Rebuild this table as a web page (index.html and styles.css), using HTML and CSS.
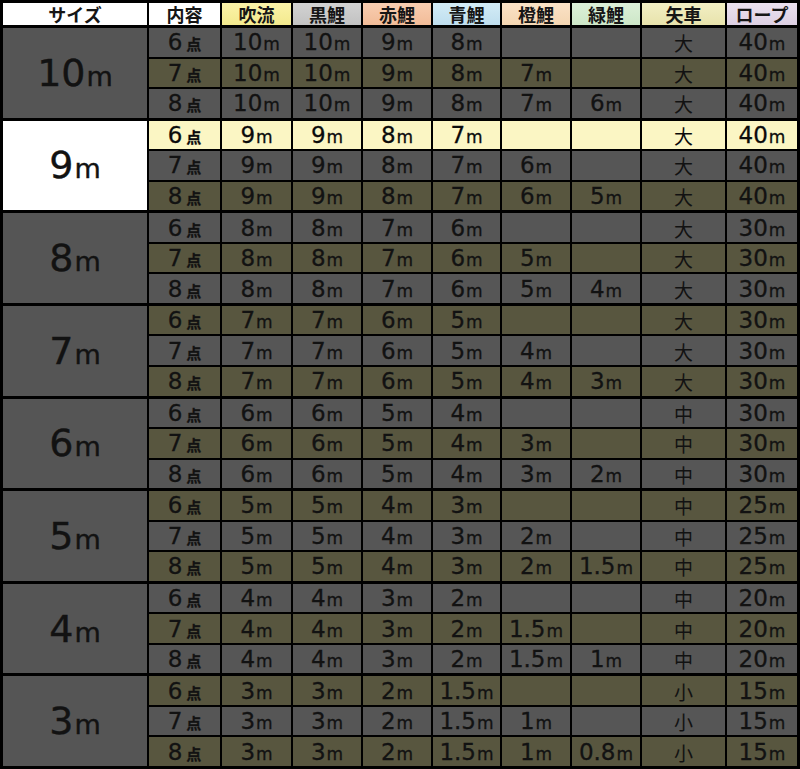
FILE: index.html
```html
<!DOCTYPE html>
<html lang="ja">
<head>
<meta charset="utf-8">
<title>鯉のぼりサイズ表</title>
<link rel="stylesheet" href="styles.css">
</head>
<body>
<div class="chart">
  <div class="head">
    <div class="hc h-size">サイズ</div>
    <div class="hc h-nai">内容</div>
    <div class="hc h-fuki">吹流</div>
    <div class="hc h-kuro">黒鯉</div>
    <div class="hc h-aka">赤鯉</div>
    <div class="hc h-ao">青鯉</div>
    <div class="hc h-dai">橙鯉</div>
    <div class="hc h-mido">緑鯉</div>
    <div class="hc h-ya">矢車</div>
    <div class="hc h-rope">ロープ</div>
  </div>

  <div class="group">
    <div class="size">10<span class="u">m</span></div>
    <div class="rows">
      <div class="row gray"><div class="c">6<span class="p">点</span></div><div class="c">10<span class="u">m</span></div><div class="c">10<span class="u">m</span></div><div class="c">9<span class="u">m</span></div><div class="c">8<span class="u">m</span></div><div class="c"></div><div class="c"></div><div class="c k">大</div><div class="c">40<span class="u">m</span></div></div>
      <div class="row olive"><div class="c">7<span class="p">点</span></div><div class="c">10<span class="u">m</span></div><div class="c">10<span class="u">m</span></div><div class="c">9<span class="u">m</span></div><div class="c">8<span class="u">m</span></div><div class="c">7<span class="u">m</span></div><div class="c"></div><div class="c k">大</div><div class="c">40<span class="u">m</span></div></div>
      <div class="row gray"><div class="c">8<span class="p">点</span></div><div class="c">10<span class="u">m</span></div><div class="c">10<span class="u">m</span></div><div class="c">9<span class="u">m</span></div><div class="c">8<span class="u">m</span></div><div class="c">7<span class="u">m</span></div><div class="c">6<span class="u">m</span></div><div class="c k">大</div><div class="c">40<span class="u">m</span></div></div>
    </div>
  </div>

  <div class="group">
    <div class="size white">9<span class="u">m</span></div>
    <div class="rows">
      <div class="row hl"><div class="c">6<span class="p">点</span></div><div class="c">9<span class="u">m</span></div><div class="c">9<span class="u">m</span></div><div class="c">8<span class="u">m</span></div><div class="c">7<span class="u">m</span></div><div class="c"></div><div class="c"></div><div class="c k">大</div><div class="c">40<span class="u">m</span></div></div>
      <div class="row gray"><div class="c">7<span class="p">点</span></div><div class="c">9<span class="u">m</span></div><div class="c">9<span class="u">m</span></div><div class="c">8<span class="u">m</span></div><div class="c">7<span class="u">m</span></div><div class="c">6<span class="u">m</span></div><div class="c"></div><div class="c k">大</div><div class="c">40<span class="u">m</span></div></div>
      <div class="row olive"><div class="c">8<span class="p">点</span></div><div class="c">9<span class="u">m</span></div><div class="c">9<span class="u">m</span></div><div class="c">8<span class="u">m</span></div><div class="c">7<span class="u">m</span></div><div class="c">6<span class="u">m</span></div><div class="c">5<span class="u">m</span></div><div class="c k">大</div><div class="c">40<span class="u">m</span></div></div>
    </div>
  </div>

  <div class="group">
    <div class="size">8<span class="u">m</span></div>
    <div class="rows">
      <div class="row gray"><div class="c">6<span class="p">点</span></div><div class="c">8<span class="u">m</span></div><div class="c">8<span class="u">m</span></div><div class="c">7<span class="u">m</span></div><div class="c">6<span class="u">m</span></div><div class="c"></div><div class="c"></div><div class="c k">大</div><div class="c">30<span class="u">m</span></div></div>
      <div class="row olive"><div class="c">7<span class="p">点</span></div><div class="c">8<span class="u">m</span></div><div class="c">8<span class="u">m</span></div><div class="c">7<span class="u">m</span></div><div class="c">6<span class="u">m</span></div><div class="c">5<span class="u">m</span></div><div class="c"></div><div class="c k">大</div><div class="c">30<span class="u">m</span></div></div>
      <div class="row gray"><div class="c">8<span class="p">点</span></div><div class="c">8<span class="u">m</span></div><div class="c">8<span class="u">m</span></div><div class="c">7<span class="u">m</span></div><div class="c">6<span class="u">m</span></div><div class="c">5<span class="u">m</span></div><div class="c">4<span class="u">m</span></div><div class="c k">大</div><div class="c">30<span class="u">m</span></div></div>
    </div>
  </div>

  <div class="group">
    <div class="size">7<span class="u">m</span></div>
    <div class="rows">
      <div class="row olive"><div class="c">6<span class="p">点</span></div><div class="c">7<span class="u">m</span></div><div class="c">7<span class="u">m</span></div><div class="c">6<span class="u">m</span></div><div class="c">5<span class="u">m</span></div><div class="c"></div><div class="c"></div><div class="c k">大</div><div class="c">30<span class="u">m</span></div></div>
      <div class="row gray"><div class="c">7<span class="p">点</span></div><div class="c">7<span class="u">m</span></div><div class="c">7<span class="u">m</span></div><div class="c">6<span class="u">m</span></div><div class="c">5<span class="u">m</span></div><div class="c">4<span class="u">m</span></div><div class="c"></div><div class="c k">大</div><div class="c">30<span class="u">m</span></div></div>
      <div class="row olive"><div class="c">8<span class="p">点</span></div><div class="c">7<span class="u">m</span></div><div class="c">7<span class="u">m</span></div><div class="c">6<span class="u">m</span></div><div class="c">5<span class="u">m</span></div><div class="c">4<span class="u">m</span></div><div class="c">3<span class="u">m</span></div><div class="c k">大</div><div class="c">30<span class="u">m</span></div></div>
    </div>
  </div>

  <div class="group">
    <div class="size">6<span class="u">m</span></div>
    <div class="rows">
      <div class="row gray"><div class="c">6<span class="p">点</span></div><div class="c">6<span class="u">m</span></div><div class="c">6<span class="u">m</span></div><div class="c">5<span class="u">m</span></div><div class="c">4<span class="u">m</span></div><div class="c"></div><div class="c"></div><div class="c k">中</div><div class="c">30<span class="u">m</span></div></div>
      <div class="row olive"><div class="c">7<span class="p">点</span></div><div class="c">6<span class="u">m</span></div><div class="c">6<span class="u">m</span></div><div class="c">5<span class="u">m</span></div><div class="c">4<span class="u">m</span></div><div class="c">3<span class="u">m</span></div><div class="c"></div><div class="c k">中</div><div class="c">30<span class="u">m</span></div></div>
      <div class="row gray"><div class="c">8<span class="p">点</span></div><div class="c">6<span class="u">m</span></div><div class="c">6<span class="u">m</span></div><div class="c">5<span class="u">m</span></div><div class="c">4<span class="u">m</span></div><div class="c">3<span class="u">m</span></div><div class="c">2<span class="u">m</span></div><div class="c k">中</div><div class="c">30<span class="u">m</span></div></div>
    </div>
  </div>

  <div class="group">
    <div class="size">5<span class="u">m</span></div>
    <div class="rows">
      <div class="row olive"><div class="c">6<span class="p">点</span></div><div class="c">5<span class="u">m</span></div><div class="c">5<span class="u">m</span></div><div class="c">4<span class="u">m</span></div><div class="c">3<span class="u">m</span></div><div class="c"></div><div class="c"></div><div class="c k">中</div><div class="c">25<span class="u">m</span></div></div>
      <div class="row gray"><div class="c">7<span class="p">点</span></div><div class="c">5<span class="u">m</span></div><div class="c">5<span class="u">m</span></div><div class="c">4<span class="u">m</span></div><div class="c">3<span class="u">m</span></div><div class="c">2<span class="u">m</span></div><div class="c"></div><div class="c k">中</div><div class="c">25<span class="u">m</span></div></div>
      <div class="row olive"><div class="c">8<span class="p">点</span></div><div class="c">5<span class="u">m</span></div><div class="c">5<span class="u">m</span></div><div class="c">4<span class="u">m</span></div><div class="c">3<span class="u">m</span></div><div class="c">2<span class="u">m</span></div><div class="c">1.5<span class="u">m</span></div><div class="c k">中</div><div class="c">25<span class="u">m</span></div></div>
    </div>
  </div>

  <div class="group">
    <div class="size">4<span class="u">m</span></div>
    <div class="rows">
      <div class="row gray"><div class="c">6<span class="p">点</span></div><div class="c">4<span class="u">m</span></div><div class="c">4<span class="u">m</span></div><div class="c">3<span class="u">m</span></div><div class="c">2<span class="u">m</span></div><div class="c"></div><div class="c"></div><div class="c k">中</div><div class="c">20<span class="u">m</span></div></div>
      <div class="row olive"><div class="c">7<span class="p">点</span></div><div class="c">4<span class="u">m</span></div><div class="c">4<span class="u">m</span></div><div class="c">3<span class="u">m</span></div><div class="c">2<span class="u">m</span></div><div class="c">1.5<span class="u">m</span></div><div class="c"></div><div class="c k">中</div><div class="c">20<span class="u">m</span></div></div>
      <div class="row gray"><div class="c">8<span class="p">点</span></div><div class="c">4<span class="u">m</span></div><div class="c">4<span class="u">m</span></div><div class="c">3<span class="u">m</span></div><div class="c">2<span class="u">m</span></div><div class="c">1.5<span class="u">m</span></div><div class="c">1<span class="u">m</span></div><div class="c k">中</div><div class="c">20<span class="u">m</span></div></div>
    </div>
  </div>

  <div class="group">
    <div class="size">3<span class="u">m</span></div>
    <div class="rows">
      <div class="row olive"><div class="c">6<span class="p">点</span></div><div class="c">3<span class="u">m</span></div><div class="c">3<span class="u">m</span></div><div class="c">2<span class="u">m</span></div><div class="c">1.5<span class="u">m</span></div><div class="c"></div><div class="c"></div><div class="c k">小</div><div class="c">15<span class="u">m</span></div></div>
      <div class="row gray"><div class="c">7<span class="p">点</span></div><div class="c">3<span class="u">m</span></div><div class="c">3<span class="u">m</span></div><div class="c">2<span class="u">m</span></div><div class="c">1.5<span class="u">m</span></div><div class="c">1<span class="u">m</span></div><div class="c"></div><div class="c k">小</div><div class="c">15<span class="u">m</span></div></div>
      <div class="row olive"><div class="c">8<span class="p">点</span></div><div class="c">3<span class="u">m</span></div><div class="c">3<span class="u">m</span></div><div class="c">2<span class="u">m</span></div><div class="c">1.5<span class="u">m</span></div><div class="c">1<span class="u">m</span></div><div class="c">0.8<span class="u">m</span></div><div class="c k">小</div><div class="c">15<span class="u">m</span></div></div>
    </div>
  </div>
</div>
</body>
</html>
```

FILE: styles.css
```css
* { box-sizing: border-box; }
html, body { margin: 0; padding: 0; background: #000; }
body { font-family: "DejaVu Sans", "Noto Sans CJK JP", sans-serif; color: #121212; }

.chart {
  width: 800px;
  height: 769px;
  background: #000;
  padding: 3px;
  display: flex;
  flex-direction: column;
  gap: 3px;
}

.head {
  height: 22px;
  flex: none;
  display: grid;
  grid-template-columns: 144px 71px 69px 68px 68px 67px 68px 68px 83px 70px;
  column-gap: 2px;
}
.hc {
  display: flex;
  align-items: center;
  justify-content: center;
  font-family: "Noto Sans CJK JP", sans-serif;
  font-size: 18px;
  font-weight: 700;
  line-height: 1;
  color: #161616;
  background: #fff;
}
.h-fuki { background: linear-gradient(#fbf3a8, #f3ea8e); }
.h-kuro { background: linear-gradient(#d2d2d2, #c2c2c2); }
.h-aka { background: linear-gradient(#f8cdb0, #f2bc98); }
.h-ao { background: linear-gradient(#d3ecf6, #bfdeee); }
.h-dai { background: linear-gradient(#fae2c6, #f4d6b2); }
.h-mido { background: linear-gradient(#dcf0d8, #cde7c8); }
.h-ya { background: linear-gradient(#f2efc4, #e8e3ac); }
.h-rope { background: linear-gradient(#ebe1ef, #ddd0e3); }

.group {
  flex: 1 1 0;
  min-height: 0;
  display: flex;
  gap: 2px;
}
.size {
  width: 144px;
  flex: none;
  background: #555555;
  display: flex;
  flex-wrap: wrap;
  align-content: center;
  align-items: baseline;
  justify-content: center;
  font-size: 38px;
  line-height: 1;
  color: #121212;
  -webkit-text-stroke: 0.4px #121212;
}
.size .u { font-size: 27px; margin-left: 1px; }
.size.white { background: #fff; }

.rows {
  flex: 1;
  min-height: 0;
  display: flex;
  flex-direction: column;
  gap: 2px;
}
.row {
  flex: 1 1 0;
  min-height: 0;
  display: grid;
  grid-template-columns: 71px 69px 68px 68px 67px 68px 68px 83px 70px;
  column-gap: 2px;
}
.c {
  min-height: 0;
  display: flex;
  flex-wrap: wrap;
  align-content: center;
  align-items: baseline;
  justify-content: center;
  font-size: 23px;
  line-height: 1;
  padding-top: 1px;
  -webkit-text-stroke: 0.3px #121212;
}
.c .u { font-size: 17px; margin-left: 1px; }
.c .p { font-family: "Noto Sans CJK JP", sans-serif; font-weight: 700; font-size: 15px; margin-left: 4px; }
.c.k { font-family: "Noto Sans CJK JP", sans-serif; font-size: 19px; -webkit-text-stroke: 0; }

.row.gray .c { background: #565656; }
.row.olive .c { background: #58563f; }
.row.hl .c { background: #fbf6c4; color: #0a0a0a; }
```
